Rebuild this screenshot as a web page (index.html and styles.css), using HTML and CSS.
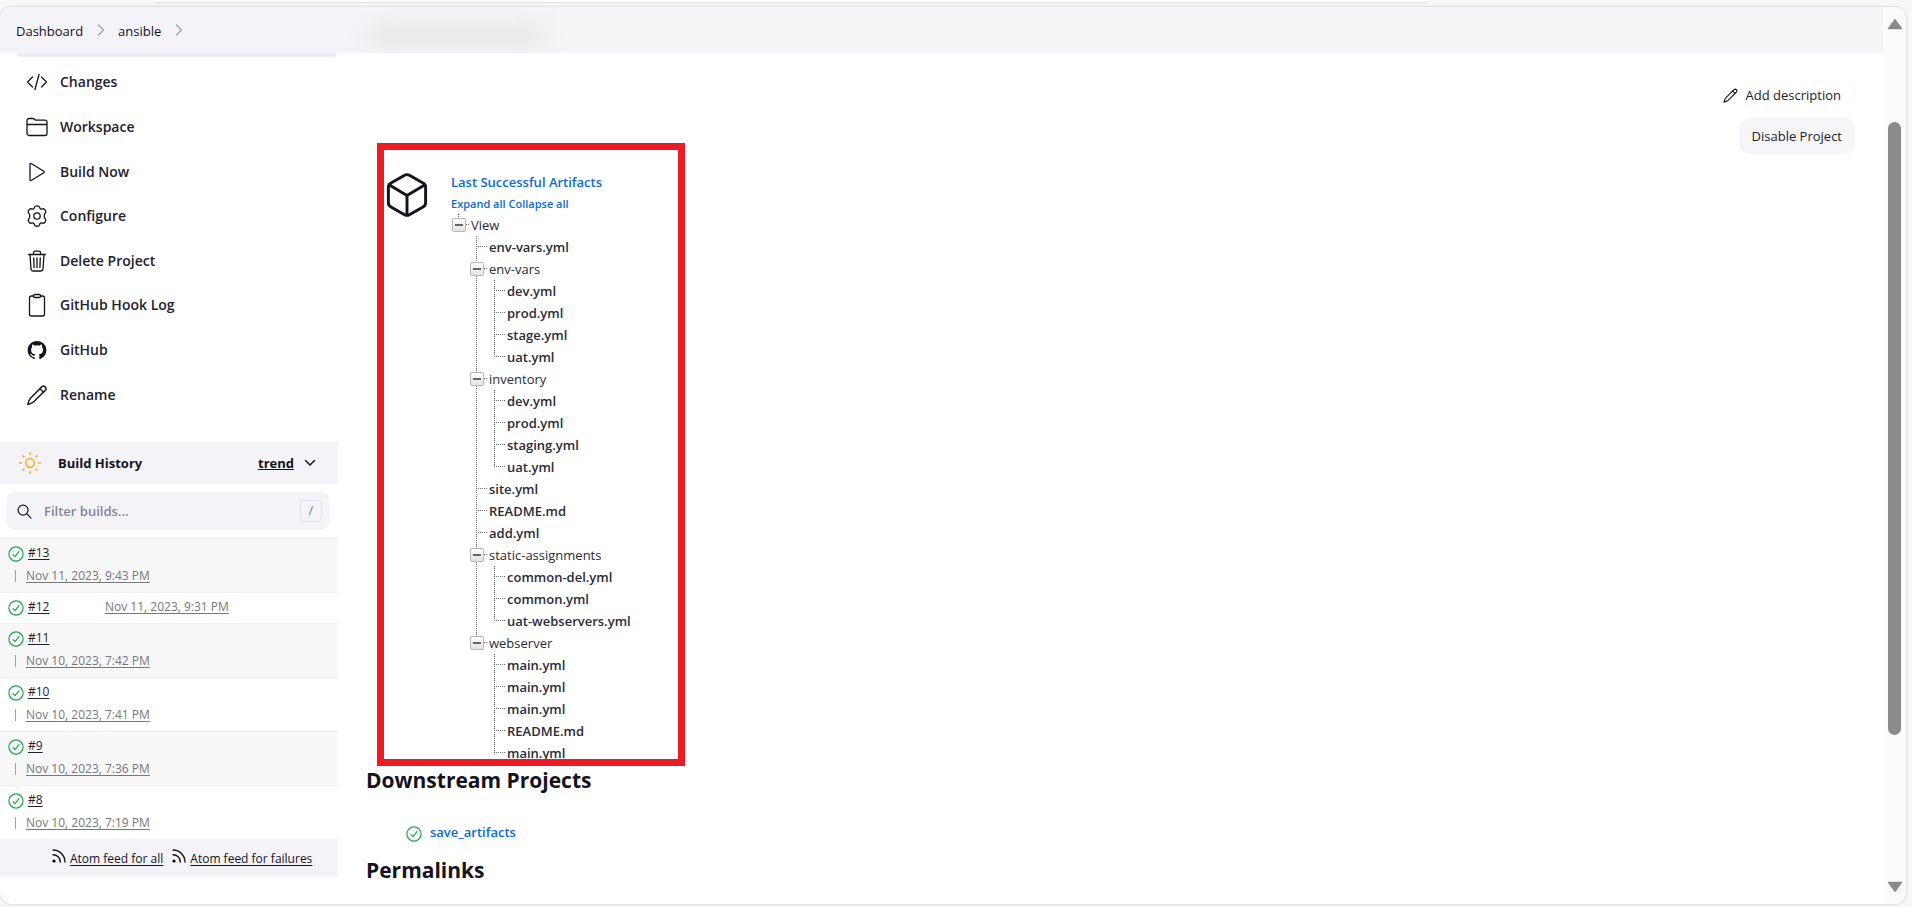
FILE: index.html
```html
<!DOCTYPE html>
<html lang="en">
<head>
<meta charset="utf-8">
<title>ansible [Jenkins]</title>
<link rel="stylesheet" href="styles.css">
</head>
<body>
<svg class="defs" aria-hidden="true">
  <symbol id="check" viewBox="0 0 16 16"><circle cx="8" cy="8" r="7.1" fill="none" stroke="#1ea64b" stroke-width="1.2"/><path d="M5 8.6l2 2 4-5" fill="none" stroke="#1ea64b" stroke-width="1.2" stroke-linecap="round" stroke-linejoin="round"/></symbol>
  <symbol id="chev" viewBox="0 0 12 14"><path d="M3.500 2l5 5-5 5" fill="none" stroke="#a3a3b5" stroke-width="1.4" stroke-linecap="round" stroke-linejoin="round"/></symbol>
  <symbol id="pencil" viewBox="0 0 24 24"><g fill="none" stroke="currentColor" stroke-width="1.6" stroke-linejoin="round" stroke-linecap="round"><path d="M17.200 3.400a2.600 2.600 0 0 1 3.500 3.500L9 18.500C7.500 20 5 20.800 2.800 21.400 3.300 19 4.200 16.500 5.700 15z"/><path d="M15 5.700l3.500 3.500"/></g></symbol>
  <symbol id="rss" viewBox="0 0 14 14"><circle cx="2" cy="12" r="1.600"/><path d="M1 5.700a7.300 7.300 0 0 1 7.300 7.300M1 1a12 12 0 0 1 12 12" fill="none" stroke="currentColor" stroke-width="1.400" stroke-linecap="round"/></symbol>
</svg>
<div class="chrome"><div class="omnibox"></div></div>
<div class="window">
  <div class="page">
    <header class="crumbs">
      <nav aria-label="Breadcrumb">
        <a href="#">Dashboard</a><svg class="chev"><use href="#chev"/></svg>
        <a href="#">ansible</a><svg class="chev"><use href="#chev"/></svg>
      </nav>
      <div class="ghost"></div>
    </header>
    <div class="columns">
      <aside class="side">
        <div class="active-edge"></div>
        <nav class="tasks" aria-label="Project">
          <a href="#"><svg viewBox="0 0 24 24"><path d="M7.500 7L2.500 12l5 5M16.500 7l5 5-5 5M14 4.500l-4 15"/></svg>Changes</a>
          <a href="#"><svg viewBox="0 0 24 24"><path d="M2 18.500V5.500a2 2 0 0 1 2-2h3.600c.6 0 1 .1 1.500.5l.8.600c.5.300.9.500 1.500.5H20a2 2 0 0 1 2 2v11.400a2 2 0 0 1-2 2H4a2 2 0 0 1-2-2zM2 9.500h20"/></svg>Workspace</a>
          <a href="#"><svg viewBox="0 0 24 24"><path d="M5 4.300v15.400c0 .8.600 1.100 1.200.8l12.600-7.700c.6-.4.6-1.200 0-1.600L6.200 3.500C5.600 3.200 5 3.500 5 4.300z"/></svg>Build Now</a>
          <a href="#"><svg viewBox="0 0 24 24"><circle cx="12" cy="12" r="3.200"/><path d="M9.500 3.200C10 1.300 14 1.300 14.500 3.200c.3 1.700 1.500 2.300 3 1.700 2-.8 4.300 2.600 2.800 4-1.400 1.200-1.400 5 0 6.200 1.500 1.400-.8 4.800-2.800 4-1.500-.6-2.700 0-3 1.700-.5 1.900-4.500 1.900-5 0-.3-1.700-1.500-2.300-3-1.700-2 .8-4.300-2.600-2.800-4 1.400-1.200 1.400-5 0-6.200-1.500-1.400.8-4.800 2.800-4 1.500.6 2.700 0 3-1.700z"/></svg>Configure</a>
          <a href="#"><svg viewBox="0 0 24 24"><path d="M5 5.500l1 14.500c.1 1.100.8 2 2 2h8c1.200 0 1.900-.9 2-2l1-14.500M3.500 5.500h17M8.500 5.300V3.700c0-.9.600-1.500 1.500-1.500h4c.9 0 1.500.6 1.500 1.500v1.600M12 9v9.500M8.700 9l.4 9.500M15.300 9l-.4 9.500"/></svg>Delete Project</a>
          <a href="#"><svg viewBox="0 0 24 24"><path d="M15.500 3H17.500a2 2 0 0 1 2 2V21a2 2 0 0 1-2 2h-11a2 2 0 0 1-2-2V5a2 2 0 0 1 2-2h2"/><rect x="8.500" y="1.500" width="7" height="3" rx="1.200"/></svg>GitHub Hook Log</a>
          <a href="#"><svg viewBox="0 0 16 16" class="solid"><path d="M8 .7a7.500 7.500 0 0 0-2.400 14.600c.4.100.5-.2.500-.4v-1.300c-2.100.5-2.500-1-2.500-1-.3-.9-.8-1.100-.8-1.100-.7-.5.1-.5.1-.5.700.1 1.100.8 1.100.8.700 1.100 1.800.8 2.200.6.100-.5.300-.8.500-1-1.700-.2-3.400-.8-3.400-3.700 0-.8.300-1.500.8-2-.1-.2-.3-1 .1-2 0 0 .600-.2 2 .8a7 7 0 0 1 3.700 0c1.400-1 2-.8 2-.8.400 1 .2 1.800.1 2 .5.500.8 1.200.8 2 0 2.900-1.800 3.500-3.400 3.700.3.200.5.700.5 1.400v2.100c0 .2.100.5.500.4A7.500 7.500 0 0 0 8 .7z"/></svg>GitHub</a>
          <a href="#"><svg><use href="#pencil"/></svg>Rename</a>
        </nav>
        <section class="history">
          <div class="history-head">
            <svg class="sun" viewBox="0 0 24 24"><circle cx="12" cy="12" r="4.300"/><path d="M12 1v3M12 20v3M1 12h3M20 12h3M4.400 4.400l2 2M17.600 17.600l2 2M19.600 4.400l-2 2M6.400 17.600l-2 2"/></svg>
            <h2>Build History</h2>
            <a href="#">trend</a>
            <svg class="down" viewBox="0 0 12 12"><path d="M1.500 3.500L6 8l4.500-4.500"/></svg>
          </div>
          <label class="filter">
            <svg viewBox="0 0 16 16"><circle cx="6.500" cy="6.500" r="5.300"/><path d="M10.500 10.500l4.500 4.500"/></svg>
            <input type="text" placeholder="Filter builds..." aria-label="Filter builds">
            <kbd>/</kbd>
          </label>
          <ul class="builds">
            <li><svg><use href="#check"/></svg><a class="num" href="#">#13</a><a class="date" href="#">Nov 11, 2023, 9:43 PM</a></li>
            <li class="inline"><svg><use href="#check"/></svg><a class="num" href="#">#12</a><a class="date" href="#">Nov 11, 2023, 9:31 PM</a></li>
            <li><svg><use href="#check"/></svg><a class="num" href="#">#11</a><a class="date" href="#">Nov 10, 2023, 7:42 PM</a></li>
            <li><svg><use href="#check"/></svg><a class="num" href="#">#10</a><a class="date" href="#">Nov 10, 2023, 7:41 PM</a></li>
            <li><svg><use href="#check"/></svg><a class="num" href="#">#9</a><a class="date" href="#">Nov 10, 2023, 7:36 PM</a></li>
            <li><svg><use href="#check"/></svg><a class="num" href="#">#8</a><a class="date" href="#">Nov 10, 2023, 7:19 PM</a></li>
          </ul>
          <div class="feeds">
            <svg><use href="#rss"/></svg><a href="#">Atom feed for all</a>
            <svg><use href="#rss"/></svg><a href="#">Atom feed for failures</a>
          </div>
        </section>
      </aside>
      <main class="main">
        <div class="top">
          <section class="artifacts">
            <svg class="cube" viewBox="0 0 40 44"><path d="M20 2.500c.9 0 1.600.300 2.300.7l13 7.400c1.600.9 2.500 2 2.500 4v14.800c0 2-.9 3.100-2.500 4l-13 7.400c-1.400.8-3.200.8-4.600 0l-13-7.400c-1.600-.9-2.500-2-2.500-4V14.600c0-2 .9-3.100 2.500-4l13-7.400c.7-.4 1.400-.7 2.300-.7zM3.200 12.500L20 22.500l16.800-10M20 22.500v19"/></svg>
            <div class="tree-area">
              <a class="latest" href="#">Last Successful Artifacts</a>
              <div class="tree-tools"><a href="#">Expand all</a> <a href="#">Collapse all</a></div>
              <ul class="tree root">
                <li class="dir"><div class="node"><button aria-label="Collapse View"></button>View</div>
                  <ul class="tree">
                    <li><a href="#">env-vars.yml</a></li>
                    <li class="dir"><div class="node"><button aria-label="Collapse env-vars"></button>env-vars</div>
                      <ul class="tree">
                        <li><a href="#">dev.yml</a></li>
                        <li><a href="#">prod.yml</a></li>
                        <li><a href="#">stage.yml</a></li>
                        <li><a href="#">uat.yml</a></li>
                      </ul>
                    </li>
                    <li class="dir"><div class="node"><button aria-label="Collapse inventory"></button>inventory</div>
                      <ul class="tree">
                        <li><a href="#">dev.yml</a></li>
                        <li><a href="#">prod.yml</a></li>
                        <li><a href="#">staging.yml</a></li>
                        <li><a href="#">uat.yml</a></li>
                      </ul>
                    </li>
                    <li><a href="#">site.yml</a></li>
                    <li><a href="#">README.md</a></li>
                    <li><a href="#">add.yml</a></li>
                    <li class="dir"><div class="node"><button aria-label="Collapse static-assignments"></button>static-assignments</div>
                      <ul class="tree">
                        <li><a href="#">common-del.yml</a></li>
                        <li><a href="#">common.yml</a></li>
                        <li><a href="#">uat-webservers.yml</a></li>
                      </ul>
                    </li>
                    <li class="dir"><div class="node"><button aria-label="Collapse webserver"></button>webserver</div>
                      <ul class="tree">
                        <li><a href="#">main.yml</a></li>
                        <li><a href="#">main.yml</a></li>
                        <li><a href="#">main.yml</a></li>
                        <li><a href="#">README.md</a></li>
                        <li><a href="#">main.yml</a></li>
                      </ul>
                    </li>
                  </ul>
                </li>
              </ul>
            </div>
            <div class="highlight"></div>
          </section>
          <div class="actions">
            <a href="#"><svg><use href="#pencil"/></svg>Add description</a>
            <button>Disable Project</button>
          </div>
        </div>
        <h2>Downstream Projects</h2>
        <div class="downstream"><svg><use href="#check"/></svg><a href="#">save_artifacts</a></div>
        <h2>Permalinks</h2>
      </main>
    </div>
  </div>
  <div class="scroll" aria-hidden="true">
    <svg viewBox="0 0 14 10"><path d="M7 1.200L12.800 9H1.200z"/></svg>
    <div class="track"><div class="thumb"></div></div>
    <svg viewBox="0 0 14 10"><path d="M1.200 1h11.600L7 8.800z"/></svg>
  </div>
</div>
</body>
</html>
```
FILE: styles.css
```css
* { box-sizing: border-box; }
body {
  margin: 0;
  height: 100vh;
  display: flex;
  flex-direction: column;
  overflow: hidden;
  padding: 0 6px 3px 0;
  background: #f7f7f7;
  color: #14141f;
  font: 600 13px/22px "Open Sans", "Noto Sans", sans-serif;
}
a { color: inherit; text-decoration: none; }
ul { list-style: none; margin: 0; padding: 0; }
h2 { margin: 0; }
button, input { font: inherit; color: inherit; }
.defs { position: absolute; width: 0; height: 0; }

.chrome { flex: none; height: 7px; padding: 0 478px 0 154px; }
.omnibox { height: 2px; background: #fff; border-radius: 0 0 8px 8px; box-shadow: 0 1px 2px #dedede; }
.window {
  flex: 1;
  min-height: 0;
  display: flex;
  overflow: hidden;
  background: #fff;
  border-radius: 12px;
  box-shadow: 0 0 2px 1px #dcdcdc;
}
.page { flex: 1; min-width: 0; }

.crumbs { display: flex; overflow: hidden; height: 46px; background: linear-gradient(90deg, #f3f3f8 0, #f3f3f8 320px, #f5f5f8 370px); }
.crumbs nav { display: flex; align-items: center; width: 366px; padding: 2px 0 0 16px; font-weight: 500; }
.chev { width: 12px; height: 14px; margin: 0 11px 2px 12px; }
.ghost { width: 180px; height: 24px; margin-top: 17px; background: #e9e9ec; border-radius: 12px; filter: blur(10px); }

.columns { display: flex; }
.side { width: 338px; flex: none; }
.active-edge { height: 4px; margin: 0 1px 0 17px; background: #ececf4; border-radius: 0 0 10px 10px; }
.tasks { display: grid; grid-auto-rows: 1fr; min-height: 357px; margin: 3px 0 25px; color: #22222e; font-size: 14px; }
.tasks a { display: flex; align-items: center; gap: 11px; padding-left: 25px; }
.tasks svg { width: 24px; height: 24px; fill: none; stroke: #14141f; stroke-width: 1.3; stroke-linecap: round; stroke-linejoin: round; }
.tasks .solid { padding: 2px; fill: #14141f; stroke: none; }

.history-head { display: flex; align-items: center; height: 42px; padding: 0 22px 0 18px; background: #f3f3f8; font-weight: 700; }
.history-head h2 { flex: 1; margin-left: 16px; font-size: 13px; }
.history-head a { text-decoration: underline; font-size: 13px; }
.sun { width: 24px; height: 24px; fill: none; stroke: #fbb32f; stroke-width: 1.700; }
.down { width: 12px; height: 12px; margin-left: 10px; fill: none; stroke: #14141f; stroke-width: 1.500; stroke-linecap: round; }
.filter { display: flex; align-items: center; height: 38px; margin: 8px; margin-left: 6px; padding: 0 8px 0 11px; background: #f3f3f8; border-radius: 10px; }
.filter svg { width: 15px; height: 15px; fill: none; stroke: #14141f; stroke-width: 1.300; stroke-linecap: round; }
.filter input { flex: 1; min-width: 0; margin-left: 12px; padding: 0; border: 0; outline: 0; background: none; }
.filter input::placeholder { color: #85859b; opacity: 1; }
kbd { width: 22px; height: 22px; border: 1px solid #dfdfe8; border-radius: 4px; color: #77778a; font: 400 12px/20px "Open Sans", sans-serif; text-align: center; }
.builds { font-size: 12px; color: #22222e; }
.builds li { display: grid; grid-template-columns: 16px 1fr; column-gap: 4px; align-content: start; height: 54px; padding: 3px 8px; border-top: 1px solid #f0f0f0; }
.builds li:nth-child(odd) { background: #f8f8f8; }
.builds svg { width: 16px; height: 16px; margin-top: 4px; }
.builds a { justify-self: start; text-decoration: underline; text-underline-offset: 2px; }
.builds .num { font-weight: 500; }
.builds .date { grid-column: 1 / -1; color: #77777c; font-weight: 400; }
.builds li:not(.inline) .date { margin: 1px 0 0 7px; display: flex; align-items: center; }
.builds li:not(.inline) .date::before { content: ""; width: 1px; height: 12px; margin-right: 10px; background: #9aa5b0; }
.builds .inline { grid-template-columns: 16px 73px 1fr; height: 31px; }
.builds .inline .date { grid-column: 3; }
.feeds { display: flex; align-items: center; height: 38px; padding: 2px 0 0 52px; background: #f3f3f8; font-size: 12px; font-weight: 500; }
.feeds svg { width: 14px; height: 14px; margin: 0 4px 6px 0; }
.feeds a { margin-right: 9px; text-decoration: underline; text-underline-offset: 2px; }

.main { flex: 1; min-width: 0; padding: 0 28px 0 28px; }
.top { display: flex; justify-content: space-between; }
.artifacts { position: relative; display: flex; width: 308px; margin: 90px 0 0 11px; padding: 28px 0 0 9px; }
.cube { width: 42px; height: 46px; margin-top: 1px; fill: none; stroke: #14141f; stroke-width: 2.800; stroke-linejoin: round; }
.tree-area { margin-left: 23px; color: #2b2b36; }
.latest, .tree-tools { display: block; color: #0b6ad6; }
.tree-tools { height: 21px; font-size: 11px; }
.highlight { position: absolute; inset: 0 0 -2px; border: 7px solid #ed1c24; pointer-events: none; }
.tree .tree { padding-left: 18px; }
.tree li { position: relative; padding-left: 20px; }
.tree .dir { padding-left: 0; }
.tree a { display: block; }
.node { position: relative; display: flex; align-items: center; gap: 5px; padding-left: 1px; font-weight: 400; }
.node button { z-index: 1; width: 14px; height: 14px; padding: 0; border: 1px solid #b8b8b8; border-radius: 2px; background: linear-gradient(#666, #666) center / 8px 2px no-repeat, linear-gradient(#fff, #e4e4e4); }
.tree li::before { content: ""; position: absolute; left: 7px; top: 0; bottom: 0; width: 1px; background: repeating-linear-gradient(#777 0 1px, transparent 1px 2px); }
.tree li:last-child::before { bottom: auto; height: 11px; }
.tree li::after { content: ""; position: absolute; left: 8px; top: 10px; width: 10px; height: 1px; background: repeating-linear-gradient(90deg, transparent 0 1px, #777 1px 2px); }

.actions { display: flex; flex-direction: column; align-items: flex-end; gap: 12px; padding-top: 31px; font-weight: 500; color: #22222e; }
.actions a { display: flex; align-items: center; gap: 7px; padding-right: 14px; }
.actions svg { width: 17px; height: 17px; color: #14141f; }
.actions button { height: 36px; padding: 0 13px; border: 0; border-radius: 10px; background: #f6f6f9; }
.main > h2 { font-size: 21px; line-height: 32px; font-weight: 700; }
.downstream { display: flex; align-items: center; gap: 8px; margin: 25px 0 11px 40px; color: #0b6ad6; }
.downstream svg { width: 16px; height: 16px; margin-top: 3px; }

.scroll { display: flex; flex-direction: column; align-items: center; flex: none; width: 23px; padding: 11px 0; background: #fcfcfc; }
.scroll svg { flex: none; width: 16px; height: 12px; fill: #8a8a8a; stroke: #8a8a8a; stroke-linejoin: round; }
.track { flex: 1; width: 13px; padding: 92px 0 146px; }
.thumb { height: 100%; border-radius: 7px; background: #8b8b8b; }
```
